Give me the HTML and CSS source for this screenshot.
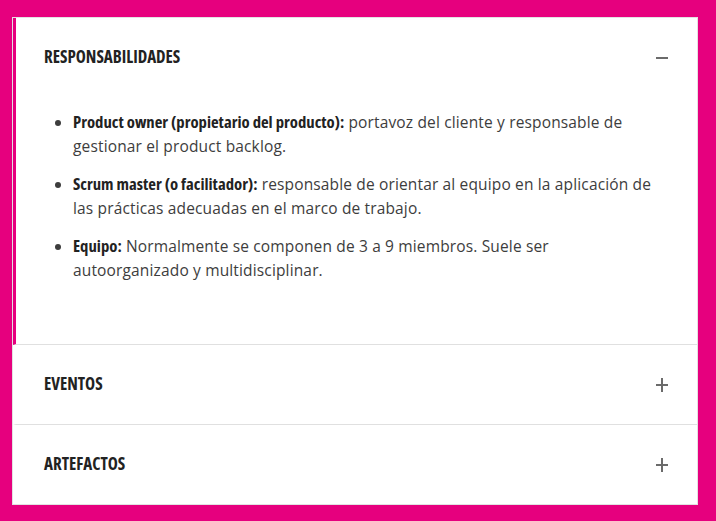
FILE: index.html
```html
<!DOCTYPE html>
<html lang="es">
<head>
<meta charset="utf-8">
<link rel="stylesheet" href="styles.css">
</head>
<body>
<div class="accordion">
  <section class="item open">
    <div class="head">
      <h3 class="title">RESPONSABILIDADES</h3>
      <span class="icon minus"></span>
    </div>
    <div class="body">
      <ul class="list">
        <li><b>Product owner (propietario del producto):</b> portavoz del cliente y responsable de gestionar el product backlog.</li>
        <li><b>Scrum master (o facilitador):</b> responsable de orientar al equipo en la aplicación de las prácticas adecuadas en el marco de trabajo.</li>
        <li><b>Equipo:</b> Normalmente se componen de 3 a 9 miembros. Suele ser autoorganizado y multidisciplinar.</li>
      </ul>
    </div>
  </section>
  <section class="item">
    <div class="head">
      <h3 class="title">EVENTOS</h3>
      <span class="icon plus"></span>
    </div>
  </section>
  <section class="item">
    <div class="head">
      <h3 class="title">ARTEFACTOS</h3>
      <span class="icon plus"></span>
    </div>
  </section>
</div>
</body>
</html>
```
FILE: styles.css
```css
html, body {
  margin: 0;
  padding: 0;
}
body {
  background: #e6007e;
  width: 716px;
  height: 521px;
  padding: 17px 18px 16px 12px;
  box-sizing: border-box;
}
.accordion {
  background: #fff;
  border: 1px solid #e2e2e2;
  box-sizing: border-box;
  height: 488px;
}
.item {
  border-left: 3px solid transparent;
  border-bottom: 1px solid #e0e0e0;
}
.item:last-child {
  border-bottom: 0;
}
.item.open {
  border-left-color: #e6007e;
}
.head {
  display: flex;
  align-items: center;
  justify-content: space-between;
  height: 79px;
  padding: 0 28px 0 28px;
}
.title {
  margin: 0;
  font-family: "Open Sans", sans-serif;
  font-stretch: 75%;
  font-weight: 700;
  font-size: 17px;
  line-height: 20px;
  color: #222;
  position: relative;
  top: -1px;
}
.icon {
  position: relative;
  width: 14px;
  height: 14px;
}
.icon::before, .icon::after {
  content: "";
  position: absolute;
  background: #6b6b6b;
}
.icon::before {
  left: 1px;
  right: 1px;
  top: 6px;
  height: 2px;
}
.plus::after {
  top: 0;
  bottom: 0;
  left: 6px;
  width: 2px;
}
.body {
  padding: 13px 40px 62px 46px;
}
.list {
  margin: 0;
  padding: 0 0 0 11px;
  font-family: "Open Sans", sans-serif;
  font-size: 15.5px;
  letter-spacing: 0.15px;
  line-height: 24px;
  color: #3d3d3d;
}
.list li {
  margin: 0 0 14px 0;
}
.list li:last-child {
  margin-bottom: 0;
}
.list b {
  font-family: "Open Sans", sans-serif;
  font-stretch: 75%;
  font-weight: 700;
  letter-spacing: 0;
  color: #222;
  font-size: 16.7px;
  line-height: 1;
}
```
